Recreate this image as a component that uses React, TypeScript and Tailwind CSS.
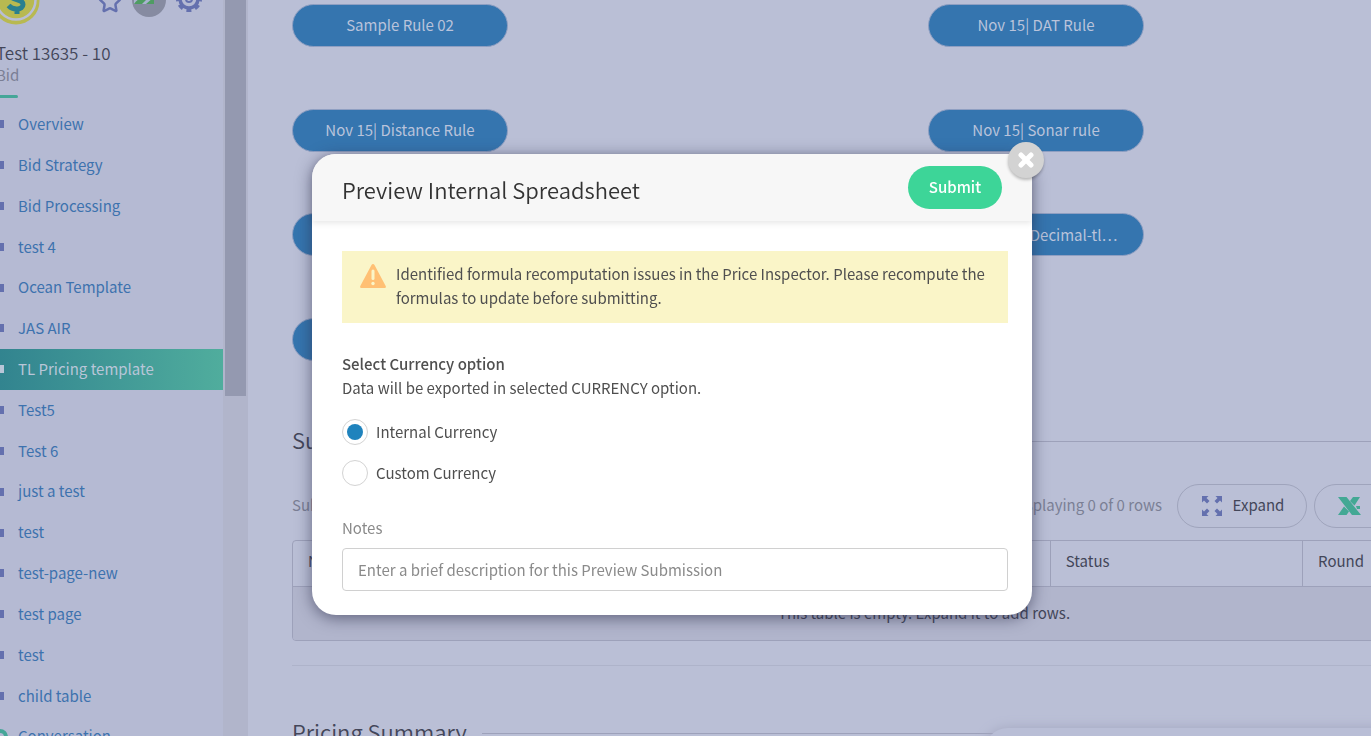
import { useState } from 'react';
import { Star, X } from 'lucide-react';

const menuItems = [
  'Overview',
  'Bid Strategy',
  'Bid Processing',
  'test 4',
  'Ocean Template',
  'JAS AIR',
  'TL Pricing template',
  'Test5',
  'Test 6',
  'just a test',
  'test',
  'test-page-new',
  'test page',
  'test',
  'child table',
  'Conversation',
];

const rules = [
  'Sample Rule 02',
  'Nov 15| DAT Rule',
  'Nov 15| Distance Rule',
  'Nov 15| Sonar rule',
  'Nov 15| Rate Rule',
  'Nov 15| 02 Decimal-tl…',
  'Nov 15| Fuel Rule',
];

const columns = ['Name', 'Type', 'Created', 'Status', 'Round'];

function BidLogo() {
  return (
    <svg className="-mt-4 -ml-2 h-[42px] w-12" viewBox="0 0 48 42">
      <circle cx="24" cy="17" r="23.500" fill="#b8b951" />
      <circle cx="24" cy="16" r="19.500" fill="none" stroke="#b9bed6" strokeWidth="2.500" />
      <path
        d="M32 8c-3-4-14-4-14 2 0 7 13 4 13 10.500 0 5.500-10 6-14.500 1M25 25v5M25 0v5"
        fill="none"
        stroke="#2a808f"
        strokeWidth="5"
      />
    </svg>
  );
}

function GearIcon() {
  return (
    <svg className="h-[26px] w-[26px]" viewBox="0 0 26 26" fill="none" stroke="#6470ae">
      <circle cx="13" cy="13" r="9" strokeWidth="3.500" />
      <circle cx="13" cy="13" r="11.500" strokeWidth="3" strokeDasharray="5 4.030" strokeDashoffset="2.500" />
      <circle cx="13" cy="13" r="3" strokeWidth="2" />
    </svg>
  );
}

function ExpandIcon() {
  return (
    <svg className="h-5 w-5" viewBox="0 0 20 20" fill="#6470ae">
      <path d="M0 0h6.500L4.500 2l3 3L5 7.500l-3-3-2 2zM20 0v6.500l-2-2-3 3L12.500 5l3-3-2-2zM0 20v-6.500l2 2 3-3L7.500 15l-3 3 2 2zM20 20h-6.500l2-2-3-3 2.500-2.500 3 3 2-2z" />
    </svg>
  );
}

function ExcelIcon() {
  return (
    <svg className="h-[18px] w-[23px]" viewBox="0 0 23 18" fill="#43a894">
      <path d="M0 0h8.500L23 18h-9zM0 18l6-8.500 5 5L8.500 18zM12 4l3-4h7l-5.500 8.500zM18 9h4v3h-3z" />
    </svg>
  );
}

function Sidebar() {
  const [active, setActive] = useState(6);

  return (
    <aside className="flex w-[248px] shrink-0 bg-[#b5bad3]">
      <div className="w-[223px] overflow-hidden">
        <div className="flex h-[41px] items-start justify-between pr-[21px]">
          <BidLogo />
          <div className="-mt-[17px] flex h-[34px] items-end gap-[10px]">
            <button aria-label="Favourite" className="mb-[3px] text-[#6470ae]">
              <Star className="h-6 w-6" strokeWidth={2.5} />
            </button>
            <button aria-label="Profile" className="h-[34px] w-[34px] overflow-hidden rounded-full bg-[#868ba1]">
              <svg className="h-full w-full" viewBox="0 0 34 34">
                <path d="M2 8h20v13H2z" fill="#a9b3d0" />
                <path d="M2 21c3-5 8-7 12-4l-4 4zM14 21l8-7v7z" fill="#4f9c63" />
              </svg>
            </button>
            <button aria-label="Settings" className="mb-[5px]">
              <GearIcon />
            </button>
          </div>
        </div>
        <h1 className="-ml-1 text-[17px] leading-6 font-[350] text-[#434659]">Test 13635 - 10</h1>
        <p className="-ml-1 text-[15px] leading-5 text-[#7b7f95]">Bid</p>
        <div className="mt-[10px] h-[3px] w-[18px] rounded-r bg-[#45a698]" />
        <ul className="mt-[6px] grid h-[653px] auto-rows-fr">
          {menuItems.map((item, i) => (
            <li key={i}>
              <a
                href="#"
                onClick={() => setActive(i)}
                className={
                  i === active
                    ? 'flex h-full items-center gap-[14px] bg-linear-to-r from-[#32848f] to-[#50ad9d] text-[15px] text-[#b9c6d8]'
                    : 'flex h-full items-center gap-[14px] text-[15px] text-[#3d72ae]'
                }
              >
                {i === menuItems.length - 1 ? (
                  <span className="-mr-1 -ml-2 h-4 w-4 rounded-full border-4 border-[#45a698]" />
                ) : (
                  <span className={i === active ? 'h-2 w-1 bg-[#b9c6d8]' : 'h-2 w-1 bg-[#6470ae]'} />
                )}
                {item}
              </a>
            </li>
          ))}
        </ul>
      </div>
      <div className="w-[25px] bg-[#b1b5cb] px-[2px]">
        <div className="h-[396px] w-[21px] bg-[#9499b0]" />
      </div>
    </aside>
  );
}

function SectionTitle({ title }: { title: string }) {
  return (
    <div className="flex items-center gap-[15px]">
      <h2 className="pb-1 text-[22px] leading-7 font-[350] text-[#434659]">{title}</h2>
      <div className="h-px flex-1 bg-[#9da1ba]" />
    </div>
  );
}

function Main() {
  return (
    <main className="w-[1308px] shrink-0 pl-[44px]">
      <div className="mt-1 grid h-[357px] grid-cols-2 content-between gap-x-2">
        {rules.map((rule) => (
          <button
            key={rule}
            className="h-[43px] w-[216px] truncate rounded-full border border-[#8f9fc2] bg-[#3575af] px-5 text-[15px] text-[#b9c3db]"
          >
            {rule}
          </button>
        ))}
      </div>

      <div className="mt-16">
        <SectionTitle title="Submissions" />
      </div>
      <div className="mt-[27px] flex h-11 items-center text-[15px] text-[#7b7f95]">
        <span className="w-[400px] pb-px">Submissions</span>
        <span className="w-[470px] pb-px text-right">Displaying 0 of 0 rows</span>
        <button className="ml-[15px] flex h-full w-[130px] items-center justify-center gap-[11px] rounded-full border border-[#9fa4bc] pb-px pl-[2px] text-[#434659]">
          <ExpandIcon />
          Expand
        </button>
        <button
          aria-label="Export to Excel"
          className="ml-[7px] flex h-full flex-1 items-center rounded-full border border-[#9fa4bc] pl-[23px]"
        >
          <ExcelIcon />
        </button>
      </div>

      <div className="mt-3 overflow-hidden rounded border border-[#9da1ba] text-[15px] text-[#434659]">
        <table className="w-full table-fixed border-collapse">
          <thead>
            <tr className="h-[45px]">
              {columns.map((col) => (
                <th
                  key={col}
                  className="border-r border-b border-[#9da1ba] px-[15px] pb-1 text-left font-normal last:border-r-0"
                >
                  {col}
                </th>
              ))}
            </tr>
          </thead>
          <tbody>
            <tr className="h-[54px] bg-[#b1b5cc]">
              <td colSpan={5} className="pb-px text-center">
                This table is empty. Expand it to add rows.
              </td>
            </tr>
          </tbody>
        </table>
      </div>

      <hr className="mt-6 border-[#aeb3ca]" />
      <div className="relative mt-[51px]">
        <SectionTitle title="Pricing Summary" />
        <div className="absolute top-[11px] right-0 left-[692px] h-12 rounded-full bg-[#b9bed6] shadow-[0_0_12px_#a4a8c0]" />
      </div>
    </main>
  );
}

function PreviewDialog() {
  const [currency, setCurrency] = useState('internal');
  const options = [
    { value: 'internal', label: 'Internal Currency' },
    { value: 'custom', label: 'Custom Currency' },
  ];

  return (
    <div className="fixed inset-0 flex items-start justify-center pt-[154px] pr-[27px]">
      <div
        role="dialog"
        aria-labelledby="dialog-title"
        className="relative w-full max-w-[720px] rounded-3xl bg-white text-[15px] leading-6 text-[#4f4f4f] shadow-[0_3px_16px_rgba(40,42,70,0.6)]"
      >
        <button
          aria-label="Close"
          className="absolute -top-3 -right-3 flex h-9 w-9 items-center justify-center rounded-full bg-[#d3d3d3] text-white shadow-[0_2px_3px_rgba(0,0,0,0.25)]"
        >
          <X className="h-5 w-5" strokeWidth={6} />
        </button>
        <header className="flex h-[67px] items-center justify-between rounded-t-3xl bg-[#f7f7f7] px-[30px] shadow-[0_2px_6px_rgba(0,0,0,0.1)]">
          <h2 id="dialog-title" className="pt-[2px] text-[22px] leading-8 font-[350] text-[#333333]">
            Preview Internal Spreadsheet
          </h2>
          <button className="h-[43px] w-[94px] rounded-full bg-[#3dd598] pb-px font-medium text-white">Submit</button>
        </header>

        <div className="pt-[30px] pr-6 pb-6 pl-[30px]">
          <div className="flex gap-[10px] bg-[#faf5c8] pt-[11px] pr-4 pb-[13px] pl-[18px]">
            <svg className="mt-[2px] h-6 w-[26px] shrink-0" viewBox="0 0 26 24">
              <path
                d="M11.500 1c.7-1.200 2.300-1.200 3 0l11.200 21c.6 1-.1 2-1.200 2h-23C.4 24-.3 23 .3 22z"
                fill="#ffc074"
              />
              <path d="M13 7v7.500" stroke="#faf5c8" strokeWidth="3" strokeLinecap="round" />
              <circle cx="13" cy="19.500" r="1.700" fill="#faf5c8" />
            </svg>
            <p>
              Identified formula recomputation issues in the Price Inspector. Please recompute the formulas to update
              before submitting.
            </p>
          </div>

          <fieldset className="mt-[29px]">
            <legend className="font-medium">Select Currency option</legend>
            <p>Data will be exported in selected CURRENCY option.</p>
            <div className="mt-[19px] flex flex-col gap-[15px]">
              {options.map((opt) => (
                <label key={opt.value} className="flex items-center gap-2">
                  <input
                    type="radio"
                    name="currency"
                    checked={currency === opt.value}
                    onChange={() => setCurrency(opt.value)}
                    className="h-[26px] w-[26px] appearance-none rounded-full border border-[#d3d3d3] bg-white bg-clip-content p-1 checked:bg-[#1f83bd]"
                  />
                  {opt.label}
                </label>
              ))}
            </div>
          </fieldset>

          <label htmlFor="notes" className="mt-[30px] block text-[#8a8a8a]">
            Notes
          </label>
          <input
            id="notes"
            type="text"
            placeholder="Enter a brief description for this Preview Submission"
            className="mt-2 block h-[43px] w-full rounded border border-[#d0d0d0] px-[15px] placeholder:text-[#8a8a8a]"
          />
        </div>
      </div>
    </div>
  );
}

export default function App() {
  return (
    <div className="flex h-screen overflow-hidden bg-[#babfd6] font-['Noto_Sans_CJK_SC','Noto_Sans',sans-serif]">
      <Sidebar />
      <Main />
      <PreviewDialog />
    </div>
  );
}
